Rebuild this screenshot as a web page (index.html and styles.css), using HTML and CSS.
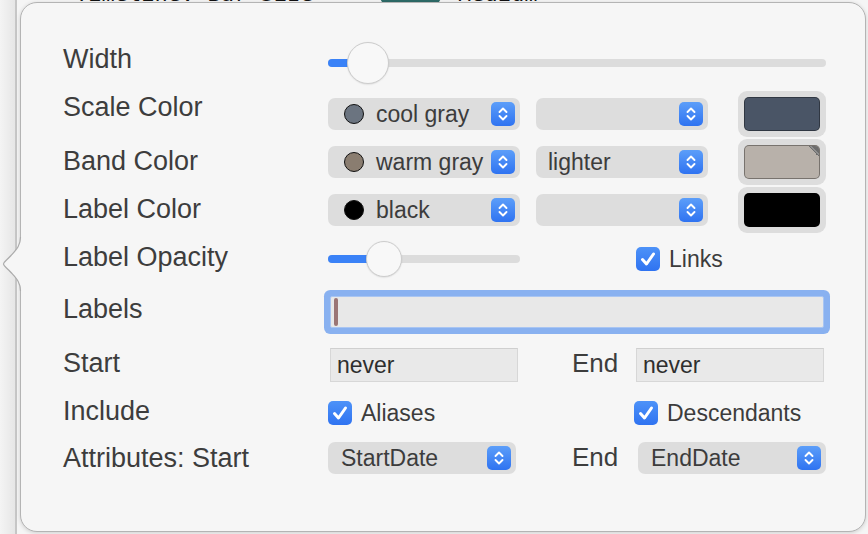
FILE: index.html
```html
<!DOCTYPE html>
<html>
<head>
<meta charset="utf-8">
<title>Timeline Inspector</title>
<link rel="stylesheet" href="styles.css">
</head>
<body>
<div class="window">
  <div class="sidebar-edge"></div>
  <div class="main">
    <div class="toolbar">
      <span class="tb-label">Timeline: Bar Size</span>
      <span class="tb-pill"></span>
      <span class="tb-value">Medium</span>
    </div>
  </div>
</div>

<div class="popover">
  <svg class="arrow" width="22" height="54" viewBox="0 0 22 54">
    <path class="arrow-fill" d="M18.5 0 C18.5 9, 14 13, 9 18.5 C4 24, 1.5 25, 1.5 27 C1.5 29, 4 30, 9 35.5 C14 41, 18.5 45, 18.5 54 L22 54 L22 0 Z"/>
    <path class="arrow-line" d="M18.5 0 C18.5 9, 14 13, 9 18.5 C4 24, 1.5 25, 1.5 27 C1.5 29, 4 30, 9 35.5 C14 41, 18.5 45, 18.5 54"/>
  </svg>

  <div class="row h54">
    <div class="label up8">Width</div>
    <div class="slider wide">
      <div class="track"><div class="fill" style="width:40px"></div></div>
      <div class="knob big" style="left:19px"></div>
    </div>
  </div>

  <div class="row h48">
    <div class="label up14">Scale Color</div>
    <div class="popup color-pop">
      <span class="dot" style="background:#6b7480"></span>
      <span class="ptext">cool gray</span>
      <span class="stepper"><svg width="24" height="24" viewBox="0 0 24 24"><path d="M8.5 10 L12 6.5 L15.5 10 M8.5 14 L12 17.5 L15.5 14"/></svg></span>
    </div>
    <div class="popup mode-pop">
      <span class="ptext"></span>
      <span class="stepper"><svg width="24" height="24" viewBox="0 0 24 24"><path d="M8.5 10 L12 6.5 L15.5 10 M8.5 14 L12 17.5 L15.5 14"/></svg></span>
    </div>
    <div class="well"><div class="swatch" style="background:#4a5566"></div></div>
  </div>

  <div class="row h48">
    <div class="label up2">Band Color</div>
    <div class="popup color-pop">
      <span class="dot" style="background:#8a7d70"></span>
      <span class="ptext">warm gray</span>
      <span class="stepper"><svg width="24" height="24" viewBox="0 0 24 24"><path d="M8.5 10 L12 6.5 L15.5 10 M8.5 14 L12 17.5 L15.5 14"/></svg></span>
    </div>
    <div class="popup mode-pop">
      <span class="ptext">lighter</span>
      <span class="stepper"><svg width="24" height="24" viewBox="0 0 24 24"><path d="M8.5 10 L12 6.5 L15.5 10 M8.5 14 L12 17.5 L15.5 14"/></svg></span>
    </div>
    <div class="well"><div class="swatch" style="background:#b8b1aa"><span class="corner"></span></div></div>
  </div>

  <div class="row h48">
    <div class="label up2">Label Color</div>
    <div class="popup color-pop">
      <span class="dot" style="background:#000000"></span>
      <span class="ptext">black</span>
      <span class="stepper"><svg width="24" height="24" viewBox="0 0 24 24"><path d="M8.5 10 L12 6.5 L15.5 10 M8.5 14 L12 17.5 L15.5 14"/></svg></span>
    </div>
    <div class="popup mode-pop">
      <span class="ptext"></span>
      <span class="stepper"><svg width="24" height="24" viewBox="0 0 24 24"><path d="M8.5 10 L12 6.5 L15.5 10 M8.5 14 L12 17.5 L15.5 14"/></svg></span>
    </div>
    <div class="well"><div class="swatch" style="background:#000000"></div></div>
  </div>

  <div class="row h50">
    <div class="label up4">Label Opacity</div>
    <div class="group g-links">
      <div class="slider narrow">
        <div class="track"><div class="fill" style="width:56px"></div></div>
        <div class="knob small" style="left:38px"></div>
      </div>
    </div>
    <label class="check">
      <span class="box"><svg width="24" height="24" viewBox="0 0 24 24"><path d="M6.5 12.5 L10.5 17 L17.5 7"/></svg></span>
      <span class="ctext">Links</span>
    </label>
  </div>

  <div class="row h56">
    <div class="label up6">Labels</div>
    <div class="textfield focused"><span class="caret"></span></div>
  </div>

  <div class="row h50">
    <div class="label up5">Start</div>
    <div class="group g-end">
      <div class="field"><span>never</span></div>
    </div>
    <div class="label endlbl">End</div>
    <div class="field"><span>never</span></div>
  </div>

  <div class="row h46">
    <div class="label up4">Include</div>
    <div class="group g-desc">
      <label class="check">
        <span class="box"><svg width="24" height="24" viewBox="0 0 24 24"><path d="M6.5 12.5 L10.5 17 L17.5 7"/></svg></span>
        <span class="ctext">Aliases</span>
      </label>
    </div>
    <label class="check">
      <span class="box"><svg width="24" height="24" viewBox="0 0 24 24"><path d="M6.5 12.5 L10.5 17 L17.5 7"/></svg></span>
      <span class="ctext">Descendants</span>
    </label>
  </div>

  <div class="row h44">
    <div class="label">Attributes: Start</div>
    <div class="group g-end">
      <div class="popup attr-pop">
        <span class="ptext">StartDate</span>
        <span class="stepper"><svg width="24" height="24" viewBox="0 0 24 24"><path d="M8.5 10 L12 6.5 L15.5 10 M8.5 14 L12 17.5 L15.5 14"/></svg></span>
      </div>
    </div>
    <div class="label endlbl2">End</div>
    <div class="popup attr-pop">
      <span class="ptext">EndDate</span>
      <span class="stepper"><svg width="24" height="24" viewBox="0 0 24 24"><path d="M8.5 10 L12 6.5 L15.5 10 M8.5 14 L12 17.5 L15.5 14"/></svg></span>
    </div>
  </div>
</div>
</body>
</html>
```

FILE: styles.css
```css
* { box-sizing: border-box; }

html, body {
  margin: 0;
  padding: 0;
}

body {
  width: 868px;
  height: 534px;
  overflow: hidden;
  position: relative;
  background: #f3f3f3;
  font-family: "Liberation Sans", Arial, sans-serif;
}

/* window behind the popover */
.window {
  display: flex;
  height: 534px;
}

.sidebar-edge {
  width: 17px;
  background: linear-gradient(to right, #f4f4f4, #e6e6e6);
  border-right: 2px solid #c6c6c6;
}

.main {
  flex: 1;
  background: #f5f5f5;
}

.toolbar {
  display: flex;
  align-items: center;
  height: 24px;
  margin-top: -19px;
  padding-left: 58px;
  font-size: 22px;
  color: #111;
  font-family: "DejaVu Sans Mono", monospace;
}

.tb-label { width: 305px; }

.tb-pill {
  width: 61px;
  height: 26px;
  border-radius: 10px;
  background: #2e6c69;
  margin-right: 17px;
}

/* popover */
.popover {
  position: absolute;
  left: 20px;
  top: 2px;
  width: 846px;
  height: 530px;
  background: #f6f6f6;
  border: 1px solid #b4b4b4;
  border-radius: 17px;
  box-shadow: 0 1px 4px rgba(0, 0, 0, 0.16);
  padding: 33px 0 0 42px;
}

.arrow {
  position: absolute;
  left: -19px;
  top: 234px;
  overflow: visible;
}

.arrow-fill { fill: #f6f6f6; }
.arrow-line { fill: none; stroke: #ababab; stroke-width: 1.2; }

.row {
  display: flex;
  align-items: center;
}

.h54 { height: 54px; }
.h48 { height: 48px; }
.h50 { height: 50px; }
.h56 { height: 56px; }
.h46 { height: 46px; }
.h44 { height: 44px; }

.label {
  width: 265px;
  flex: none;
  font-size: 27px;
  line-height: 30px;
  color: #3d3d3d;
  white-space: nowrap;
}

.up2 { margin-bottom: 2px; }
.up4 { margin-bottom: 4px; }
.up5 { margin-bottom: 5px; }
.up6 { margin-bottom: 6px; }
.up8 { margin-bottom: 8px; }
.up14 { margin-bottom: 14px; }

.endlbl { width: 64px; margin-bottom: 5px; font-size: 26px; }
.endlbl2 { width: 66px; font-size: 26px; margin-bottom: 2px; }

.group { flex: none; display: flex; align-items: center; }
.g-end { width: 244px; }
.g-links { width: 308px; }
.g-desc { width: 306px; }

/* sliders */
.slider {
  position: relative;
  display: flex;
  align-items: center;
  flex: none;
}

.slider.wide { width: 498px; height: 44px; }
.slider.narrow { width: 192px; height: 38px; }

.track {
  width: 100%;
  height: 8px;
  border-radius: 4px;
  background: #dcdcdc;
  overflow: hidden;
}

.fill {
  height: 100%;
  background: #3a82f7;
}

.knob {
  position: absolute;
  border-radius: 50%;
  background: #f8f8f8;
  border: 1.5px solid #cdcdcd;
  box-shadow: 0 0.5px 1.5px rgba(0, 0, 0, 0.12);
}

.knob.big { width: 42px; height: 42px; top: 1px; }
.knob.small { width: 36px; height: 36px; top: 1px; }

/* popup buttons */
.popup {
  flex: none;
  display: flex;
  align-items: center;
  height: 32px;
  border-radius: 7px;
  background: #dddddd;
  padding-right: 5px;
  font-size: 23px;
  color: #3c3c3c;
}

.color-pop { width: 192px; padding-left: 16px; margin-right: 16px; }
.mode-pop { width: 172px; padding-left: 12px; margin-right: 30px; }
.attr-pop { width: 188px; padding-left: 13px; }

.dot {
  width: 20px;
  height: 20px;
  border-radius: 50%;
  border: 1.5px solid #111;
  margin-right: 12px;
  flex: none;
}

.ptext { flex: 1; white-space: nowrap; }

.stepper {
  width: 24px;
  height: 24px;
  border-radius: 5px;
  background: linear-gradient(#5c9ef9, #2f73f1);
  display: flex;
  flex: none;
}

.stepper path {
  fill: none;
  stroke: #fff;
  stroke-width: 1.9;
  stroke-linecap: round;
  stroke-linejoin: round;
}

/* colour wells */
.well {
  flex: none;
  width: 88px;
  height: 46px;
  border-radius: 9px;
  background: #dddddd;
  padding: 6px;
}

.swatch {
  position: relative;
  width: 76px;
  height: 34px;
  border-radius: 5px;
  border: 1px solid rgba(0, 0, 0, 0.35);
  overflow: hidden;
}

.corner {
  position: absolute;
  right: 0;
  top: 0;
  width: 11px;
  height: 11px;
  background: linear-gradient(to bottom left, #6d6d6d 0, #6d6d6d 35%, #8f8f8f 35%, #8f8f8f 45%, #6d6d6d 45%, #6d6d6d 50%, transparent 50%);
}

/* checkboxes */
.check {
  display: flex;
  align-items: center;
  flex: none;
}

.box {
  width: 24px;
  height: 24px;
  border-radius: 5px;
  background: linear-gradient(#4d92f8, #2f73f1);
  display: flex;
  margin-right: 9px;
}

.box path {
  fill: none;
  stroke: #fff;
  stroke-width: 3;
  stroke-linecap: round;
  stroke-linejoin: round;
}

.ctext {
  font-size: 23px;
  color: #3c3c3c;
}

/* text fields */
.textfield {
  flex: none;
  width: 494px;
  height: 32px;
  margin-left: 2px;
  background: #e8e8e8;
  border: 1px solid #a9c5f2;
  display: flex;
  align-items: center;
  padding-left: 3px;
}

.textfield.focused {
  box-shadow: 0 0 0 6px #89b1f0;
  border-radius: 2px;
}

.caret {
  width: 4px;
  height: 28px;
  border-radius: 2px;
  background: #9b7575;
}

.field {
  flex: none;
  width: 188px;
  height: 34px;
  background: #e9e9e9;
  border: 1px solid #d7d7d7;
  border-top-color: #cfcfcf;
  display: flex;
  align-items: center;
  padding-left: 6px;
  font-size: 23px;
  color: #2e2e2e;
}

.g-end .field { margin-left: 2px; }
```
